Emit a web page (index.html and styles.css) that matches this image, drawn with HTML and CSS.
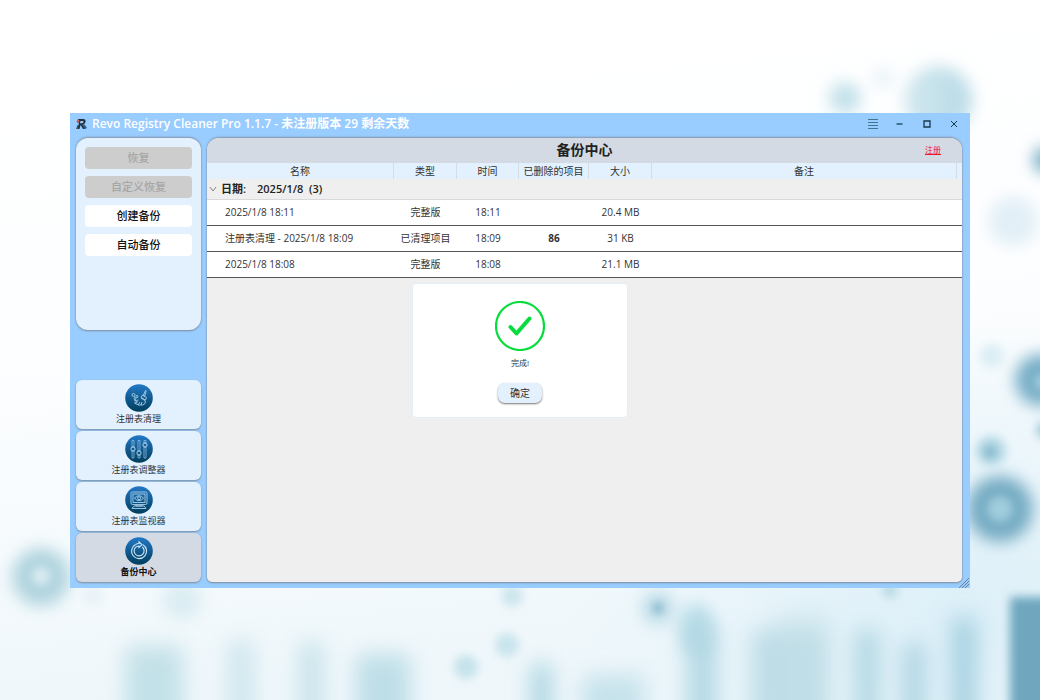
FILE: index.html
```html
<!DOCTYPE html>
<html lang="zh-CN">
<head>
<meta charset="utf-8">
<meta name="viewport" content="width=device-width, initial-scale=1">
<title>Revo Registry Cleaner Pro</title>
<link rel="stylesheet" href="styles.css">
</head>
<body>
<svg class="wallpaper" viewBox="0 0 1040 700" preserveAspectRatio="xMidYMid slice" aria-hidden="true">
  <defs>
    <linearGradient id="sky" x1="0" y1="0" x2="0.15" y2="1">
      <stop offset="0" stop-color="#ffffff"/><stop offset="0.5" stop-color="#fdfeff"/><stop offset="1" stop-color="#eff7fb"/>
    </linearGradient>
    <radialGradient id="glow"><stop offset="0" stop-color="#dceff8"/><stop offset="1" stop-color="#e0f1f9" stop-opacity="0"/></radialGradient>
    <linearGradient id="orb"><stop offset="0" stop-color="#d3e9f0"/><stop offset="1" stop-color="#b6d9e5"/></linearGradient>
    <filter id="b4" x="-50%" y="-50%" width="200%" height="200%"><feGaussianBlur stdDeviation="5"/></filter>
    <filter id="b7" x="-50%" y="-50%" width="200%" height="200%"><feGaussianBlur stdDeviation="8"/></filter>
    <filter id="b10" x="-80%" y="-50%" width="260%" height="200%"><feGaussianBlur stdDeviation="11"/></filter>
  </defs>
  <rect width="1040" height="700" fill="url(#sky)"/>
  <ellipse cx="960" cy="620" rx="400" ry="300" fill="url(#glow)"/>
  <g filter="url(#b7)">
    <circle cx="938" cy="100" r="34" fill="url(#orb)"/>
    <circle cx="845" cy="98" r="16" fill="#c3e1ea"/>
    <circle cx="883" cy="78" r="10" fill="#e6f2f8"/>
    <circle cx="1013" cy="221" r="25" fill="#e2eff6"/>
    <circle cx="1046" cy="160" r="13" fill="#73acc3"/>
    <circle cx="1041" cy="380" r="26" fill="#76adc6"/>
    <circle cx="1000" cy="509" r="33" fill="#74abc3"/>
    <circle cx="41" cy="577" r="29" fill="#b0d4de"/>
    <circle cx="182" cy="600" r="20" fill="#dcedf3"/>
    <circle cx="658" cy="608" r="17" fill="#c3dfe9"/>
    <ellipse cx="697" cy="630" rx="18" ry="26" fill="#b8dce7"/>
  </g>
  <g filter="url(#b4)">
    <circle cx="1043" cy="382" r="9" fill="#a1cbdc"/>
    <circle cx="1000" cy="509" r="13" fill="#a1cddd"/>
    <circle cx="41" cy="576" r="9" fill="#dceef3"/>
    <circle cx="992" cy="356" r="12" fill="#dceef4"/>
    <circle cx="1045" cy="430" r="9" fill="#a0cbdb"/>
    <circle cx="991" cy="451" r="15" fill="#b5d9e6"/>
    <circle cx="990" cy="452" r="6" fill="#70aec5"/>
    <circle cx="93" cy="596" r="10" fill="#e8f2f8"/>
    <circle cx="512" cy="596" r="11" fill="#cde5ed"/>
    <circle cx="507" cy="645" r="12" fill="#c8e4ec"/>
    <circle cx="466" cy="667" r="12" fill="#c5e2ea"/>
    <circle cx="658" cy="608" r="5" fill="#6faac1"/>
    <circle cx="890" cy="590" r="8" fill="#b9d9e4"/>
  </g>
  <g filter="url(#b10)">
    <rect x="125" y="646" width="58" height="100" fill="#c3e1e8"/>
    <rect x="228" y="640" width="26" height="100" fill="#cfe6ee"/>
    <rect x="299" y="642" width="24" height="100" fill="#c8e3ea"/>
    <rect x="356" y="654" width="54" height="90" fill="#bedee7"/>
    <rect x="532" y="664" width="19" height="80" fill="#a6d2df"/>
    <rect x="582" y="675" width="62" height="70" fill="#c6e2eb"/>
    <rect x="688" y="630" width="28" height="110" fill="#b1d7e3"/>
    <rect x="752" y="630" width="76" height="110" fill="#bddce6"/>
    <rect x="775" y="612" width="55" height="110" fill="#c3dfe8" opacity="0.5"/>
    <rect x="856" y="630" width="22" height="110" fill="#afd6e2"/>
    <rect x="904" y="644" width="20" height="100" fill="#a9d2e0"/>
    <rect x="953" y="618" width="22" height="130" fill="#a0cede"/>
  </g>
  <rect x="1010" y="597" width="90" height="180" fill="#70a7bf" filter="url(#b4)"/>
</svg>

<main class="desktop">
  <div class="window">
    <header class="titlebar">
      <svg class="logo" viewBox="0 0 12 12" aria-hidden="true">
        <path d="M3 1h5q3 0 2.500 3-.5 2-3 2.500L10 11H8L5.500 7 4.500 11H2.500L4 4.500H2z" fill="#22303d"/>
        <path d="M5.500 3h2q1.300 0 1 1-.3 1.200-2 1.200H5z" fill="#9ccfff"/>
        <path d="M1 3.500l3-2 .5 2-1.500 1z" fill="#d0604f"/>
        <path d="M7 7l2-1 3 4-2 1z" fill="#285b88"/>
        <path d="M1 11l1.500-4 1 .5-1 3.500z" fill="#3a5369"/>
      </svg>
      <h1 class="window-title">Revo Registry Cleaner Pro 1.1.7 - 未注册版本 29 剩余天数</h1>
      <button class="win-btn" type="button" aria-label="菜单"><svg viewBox="0 0 12 12"><path d="M1 1.500h10M1 4.500h10M1 7.500h10M1 10.500h10" stroke="#44758f"/></svg></button>
      <button class="win-btn" type="button" aria-label="最小化"><svg viewBox="0 0 12 12"><path d="M2.500 6h6" stroke="#24556a" stroke-width="1.500"/></svg></button>
      <button class="win-btn" type="button" aria-label="最大化"><svg viewBox="0 0 12 12"><path d="M3 3h6v6H3z" fill="none" stroke="#17394b" stroke-width="1.300"/></svg></button>
      <button class="win-btn" type="button" aria-label="关闭"><svg viewBox="0 0 12 12"><path d="M3 3l6 6M9 3L3 9" stroke="#17394b"/></svg></button>
    </header>

    <div class="content">
      <aside class="sidebar">
        <div class="actions">
          <button class="action" type="button" disabled>恢复</button>
          <button class="action" type="button" disabled>自定义恢复</button>
          <button class="action" type="button">创建备份</button>
          <button class="action" type="button">自动备份</button>
        </div>
        <nav class="modules">
          <button class="module" type="button">
            <svg class="module-icon" viewBox="0 0 28 28" aria-hidden="true"><use href="#disc"/>
              <g fill="none" stroke="#a9d0ea" stroke-width="0.900">
                <path d="M20.500 6.500l-2.200 5 1.300 1 1.600-5.700zM17.500 11l4 2.500-1 2.500-4.500-2.500z"/>
                <path d="M16 14l4.500 3q0 3.500-3 4-4 1-8-2 2 0 3-1-2 0-3-2 2 1 4 0M13 21l2-3M16 21l1-3"/>
                <circle cx="8.500" cy="11" r="1.500"/><circle cx="12" cy="12.500" r="1"/><circle cx="10" cy="14.500" r="1"/>
              </g>
            </svg>
            <span>注册表清理</span>
          </button>
          <button class="module" type="button">
            <svg class="module-icon" viewBox="0 0 28 28" aria-hidden="true"><use href="#disc"/>
              <g fill="none" stroke="#9cc6e4" stroke-width="0.700">
                <path d="M7 5.500h2v6.500H7zM7 16h2v7H7zM13 5.500h2v10.500h-2zM13 20h2v3h-2zM19 5.500h2V8h-2zM19 12h2v11h-2z"/>
                <g stroke="#c0dff3" stroke-width="0.900"><circle cx="8" cy="14" r="2.100"/><circle cx="14" cy="18" r="2.100"/><circle cx="20" cy="10" r="2.100"/></g>
              </g>
            </svg>
            <span>注册表调整器</span>
          </button>
          <button class="module" type="button">
            <svg class="module-icon" viewBox="0 0 28 28" aria-hidden="true"><use href="#disc"/>
              <g fill="none" stroke="#a9d0ea" stroke-width="0.900">
                <rect x="6" y="6" width="16" height="12.500" rx="1.500"/><rect x="8" y="8" width="12" height="8.500"/>
                <path d="M9.500 12.200q4.500-5 9 0-4.500 5-9 0zM11 18.500V20h6v-1.500M9 20h10l2 2.500H7z"/><circle cx="14" cy="12.200" r="1.500"/>
              </g>
            </svg>
            <span>注册表监视器</span>
          </button>
          <button class="module module-active" type="button" aria-current="page">
            <svg class="module-icon" viewBox="0 0 28 28" aria-hidden="true"><use href="#disc"/>
              <g fill="none" stroke="#d2e9f7" stroke-width="1.100">
                <path d="M10.500 7.500a7.500 7.500 0 1 0 7.500 0.200"/>
                <path d="M11.300 9.700a5 5 0 1 0 6 0.300"/>
                <path d="M10.500 7.500q2-1.100 3.500-1V4.800l3 3-3 2.700V9q-1.200 0-2.700.7"/>
              </g>
            </svg>
            <span>备份中心</span>
          </button>
        </nav>
      </aside>

      <section class="panel">
        <div class="panel-head">
          <h2>备份中心</h2>
          <a class="register" href="#">注册</a>
        </div>
        <table class="backups">
          <colgroup>
            <col class="c-name"><col class="c-type"><col class="c-time"><col class="c-items"><col class="c-size"><col><col class="c-end">
          </colgroup>
          <thead>
            <tr><th>名称</th><th>类型</th><th>时间</th><th>已删除的项目</th><th>大小</th><th>备注</th><td></td></tr>
          </thead>
          <tbody>
            <tr class="group"><th colspan="7"><div class="group-label"><svg viewBox="0 0 8 8" aria-hidden="true"><path d="M1 2l3 4 3-4" fill="none" stroke="#858585"/></svg><span>日期:</span><span>2025/1/8&nbsp; (3)</span></div></th></tr>
            <tr><td>2025/1/8 18:11</td><td>完整版</td><td>18:11</td><td></td><td>20.4 MB</td><td></td><td></td></tr>
            <tr><td>注册表清理 - 2025/1/8 18:09</td><td>已清理项目</td><td>18:09</td><td><b>86</b></td><td>31 KB</td><td></td><td></td></tr>
            <tr><td>2025/1/8 18:08</td><td>完整版</td><td>18:08</td><td></td><td>21.1 MB</td><td></td><td></td></tr>
          </tbody>
        </table>
      </section>
    </div>

    <div class="dialog" role="dialog" aria-labelledby="done">
      <svg class="check" viewBox="0 0 50 50" aria-hidden="true"><circle cx="25" cy="25" r="24" fill="none" stroke="#06dc3c" stroke-width="2.200"/><path d="M15.500 26l6 6.500L34.500 17.500" fill="none" stroke="#06dc3c" stroke-width="4" stroke-linecap="round" stroke-linejoin="round"/></svg>
      <p id="done">完成!</p>
      <button class="ok" type="button">确定</button>
    </div>
    <svg class="grip" viewBox="0 0 10 10" aria-hidden="true"><path d="M0 10L10 0M3 10l7-7M6 10l4-4" stroke="#6b7f95"/></svg>
  </div>
</main>

<svg class="defs" aria-hidden="true">
  <defs>
    <linearGradient id="disc-fill" x1="0" y1="0" x2="0" y2="1"><stop offset="0" stop-color="#2379c6"/><stop offset="1" stop-color="#003d5c"/></linearGradient>
    <circle id="disc" cx="14" cy="14" r="13.800" fill="url(#disc-fill)"/>
  </defs>
</svg>
</body>
</html>
```
FILE: styles.css
```css
* { box-sizing: border-box; }

body {
  margin: 0;
  min-height: 100vh;
  font-family: "Open Sans", "Noto Sans CJK SC", sans-serif;
  font-size: 11px;
  line-height: 16px;
  color: #333;
}

button {
  border: 0;
  padding: 0;
  font: inherit;
  color: inherit;
}

.wallpaper {
  position: fixed;
  inset: 0;
  z-index: -1;
  width: 100%;
  height: 100%;
}

.defs {
  position: absolute;
  width: 0;
  height: 0;
}

.desktop {
  display: flex;
  flex-direction: column;
  justify-content: center;
  min-height: 100vh;
  padding: 16px 70px;
}

.window {
  position: relative;
  display: flex;
  flex-direction: column;
  min-height: 475px;
  padding-bottom: 6px;
  background: #99ccff;
}

.titlebar {
  display: flex;
  align-items: center;
  height: 24px;
  padding: 0 3px 2px 5px;
}

.logo {
  width: 12px;
  height: 12px;
  margin-right: 5px;
}

.window-title {
  flex: 1;
  margin: 0;
  font-size: 12px;
  font-weight: 600;
  line-height: 22px;
  color: #fff;
}

.win-btn {
  display: grid;
  place-items: center;
  width: 27px;
  height: 22px;
  background: none;
}

.win-btn svg {
  width: 12px;
  height: 12px;
}

.content {
  flex: 1;
  display: grid;
  grid-template-columns: 125px 1fr;
  gap: 6px;
  padding: 1px 8px 0 6px;
}

.sidebar {
  display: flex;
  flex-direction: column;
  justify-content: space-between;
}

.actions {
  display: flex;
  flex-direction: column;
  gap: 7px;
  height: 192px;
  padding: 9px;
  border-radius: 12px;
  background: #e2f1fd;
  box-shadow: 0 -1px 2px #8496a8, 0 1px 2px #7d8c9b;
}

.action {
  height: 22px;
  border-radius: 4px;
  background: #fff;
  font-weight: 500;
  color: #111;
}

.action:disabled {
  background: #cdcdcd;
  color: #a6a6a6;
}

.modules {
  display: flex;
  flex-direction: column;
  gap: 2px;
}

.module {
  display: flex;
  flex-direction: column;
  align-items: center;
  height: 49px;
  padding-top: 4px;
  border-radius: 6px;
  background: #e2f1fd;
  box-shadow: 0 1px 2px #7d8c9b;
  font-size: 9px;
  line-height: 14px;
}

.module-active {
  background: #d3dae4;
  font-weight: 700;
  color: #111;
}

.module-icon {
  width: 28px;
  height: 28px;
  flex: none;
}

.panel {
  overflow: hidden;
  border-radius: 12px 12px 5px 5px;
  background: #efefef;
  box-shadow: 0 -1px 2px #8496a8, 0 1px 2px #7d8c9b;
}

.panel-head {
  display: grid;
  grid-template-columns: 1fr auto 1fr;
  align-items: center;
  height: 25px;
  padding: 0 21px;
  background: #d3dae4;
}

.panel-head h2 {
  grid-column: 2;
  margin: 0;
  font-size: 14px;
  font-weight: 700;
  color: #222;
}

.register {
  justify-self: end;
  font-size: 8px;
  color: #f01828;
}

.backups {
  width: 100%;
  border-collapse: separate;
  border-spacing: 0;
  table-layout: fixed;
}

.c-name { width: 187px; }
.c-type, .c-size { width: 63px; }
.c-time { width: 62px; }
.c-items { width: 70px; }
.c-end { width: 5px; }

.backups th,
.backups td {
  padding: 0;
  text-align: center;
  white-space: nowrap;
}

.backups thead th,
.backups thead td {
  height: 16px;
  background: #e2f1fd;
  font-size: 10px;
  font-weight: 400;
  line-height: 14px;
  border-right: 1px solid #d6dde4;
}

.backups thead td { border-right: 0; }

.backups tbody td {
  height: 26px;
  background: #fff;
  border-bottom: 1px solid #555;
  font-size: 10px;
}

.backups tbody td:first-child {
  padding-left: 18px;
  text-align: left;
}

.backups .group th {
  height: 21px;
  border-bottom: 1px solid #d9d9d9;
  font-size: 11px;
  font-weight: 600;
  color: #222;
}

.group-label {
  display: flex;
  align-items: center;
  gap: 11px;
  padding-left: 2px;
}

.group-label svg {
  width: 8px;
  height: 8px;
  margin-right: -7px;
}

.dialog {
  position: absolute;
  inset: 0;
  margin: auto;
  display: flex;
  flex-direction: column;
  align-items: center;
  width: 216px;
  height: 135px;
  padding-top: 17px;
  border: 1px solid #e0effc;
  border-radius: 4px;
  background: #fff;
}

.check {
  width: 50px;
  height: 50px;
}

.dialog p {
  margin: 4px 0 12px;
  font-size: 8px;
}

.ok {
  width: 44px;
  height: 20px;
  border-radius: 7px;
  background: #e2f1fd;
  box-shadow: 0 1px 2px #777;
  font-size: 10px;
}

.grip {
  position: absolute;
  right: 1px;
  bottom: 0;
  width: 10px;
  height: 10px;
}
```
